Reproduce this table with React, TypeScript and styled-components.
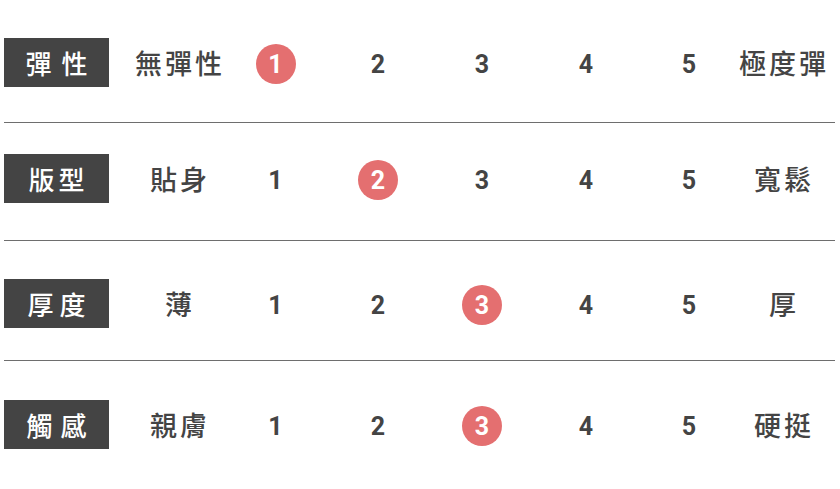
import React from 'react';
import styled, { createGlobalStyle } from 'styled-components';

const GlobalStyle = createGlobalStyle`
  body {
    margin: 0;
    background: #fff;
    font-family: "Noto Sans CJK TC", "Noto Sans", sans-serif;
  }
`;

const Table = styled.div`
  width: 831px;
  margin-left: 4px;
`;

const Row = styled.div<{ $top: number; $bottom: number; $last?: boolean }>`
  display: grid;
  grid-template-columns: 131px 90px 101px repeat(3, 104px) 102px 88px;
  align-items: center;
  padding-top: ${(p) => p.$top}px;
  padding-bottom: ${(p) => p.$bottom}px;
  border-bottom: ${(p) => (p.$last ? 'none' : '1px solid #6e6e6e')};
`;

const Label = styled.div<{ $spacing: number }>`
  width: 105px;
  height: 49px;
  background: #444;
  color: #fff;
  display: flex;
  align-items: center;
  justify-content: center;
  font-size: 26px;
  font-weight: 500;
  letter-spacing: ${(p) => p.$spacing}px;
  text-indent: ${(p) => p.$spacing}px;
`;

const Word = styled.div`
  display: flex;
  justify-content: center;
  color: #444;
  font-size: 27px;
  font-weight: 500;
  letter-spacing: 3px;
  white-space: nowrap;
`;

const Cell = styled.div`
  display: flex;
  justify-content: center;
  align-items: center;
  padding-top: 3px;
`;

const Num = styled.span<{ $active?: boolean }>`
  width: 40px;
  height: 40px;
  border-radius: 50%;
  display: flex;
  align-items: center;
  justify-content: center;
  font-family: Roboto, "Liberation Sans", sans-serif;
  font-weight: 700;
  font-size: 25px;
  color: ${(p) => (p.$active ? '#fff' : '#444')};
  background: ${(p) => (p.$active ? '#e46f70' : 'transparent')};
`;

type Spec = {
  label: string;
  spacing: number;
  low: string;
  high: string;
  value: number;
  top: number;
  bottom: number;
};

const specs: Spec[] = [
  { label: '彈性', spacing: 10, low: '無彈性', high: '極度彈', value: 1, top: 38, bottom: 35 },
  { label: '版型', spacing: 4, low: '貼身', high: '寬鬆', value: 2, top: 31, bottom: 37 },
  { label: '厚度', spacing: 6, low: '薄', high: '厚', value: 3, top: 38, bottom: 32 },
  { label: '觸感', spacing: 8, low: '親膚', high: '硬挺', value: 3, top: 39, bottom: 0 },
];

const App: React.FC = () => {
  return (
    <>
      <GlobalStyle />
      <Table>
        {specs.map((s, i) => (
          <Row key={s.label} $top={s.top} $bottom={s.bottom} $last={i === specs.length - 1}>
            <Label $spacing={s.spacing}>{s.label}</Label>
            <Word>{s.low}</Word>
            {[1, 2, 3, 4, 5].map((n) => (
              <Cell key={n}>
                <Num $active={n === s.value}>{n}</Num>
              </Cell>
            ))}
            <Word>{s.high}</Word>
          </Row>
        ))}
      </Table>
    </>
  );
};

export default App;
